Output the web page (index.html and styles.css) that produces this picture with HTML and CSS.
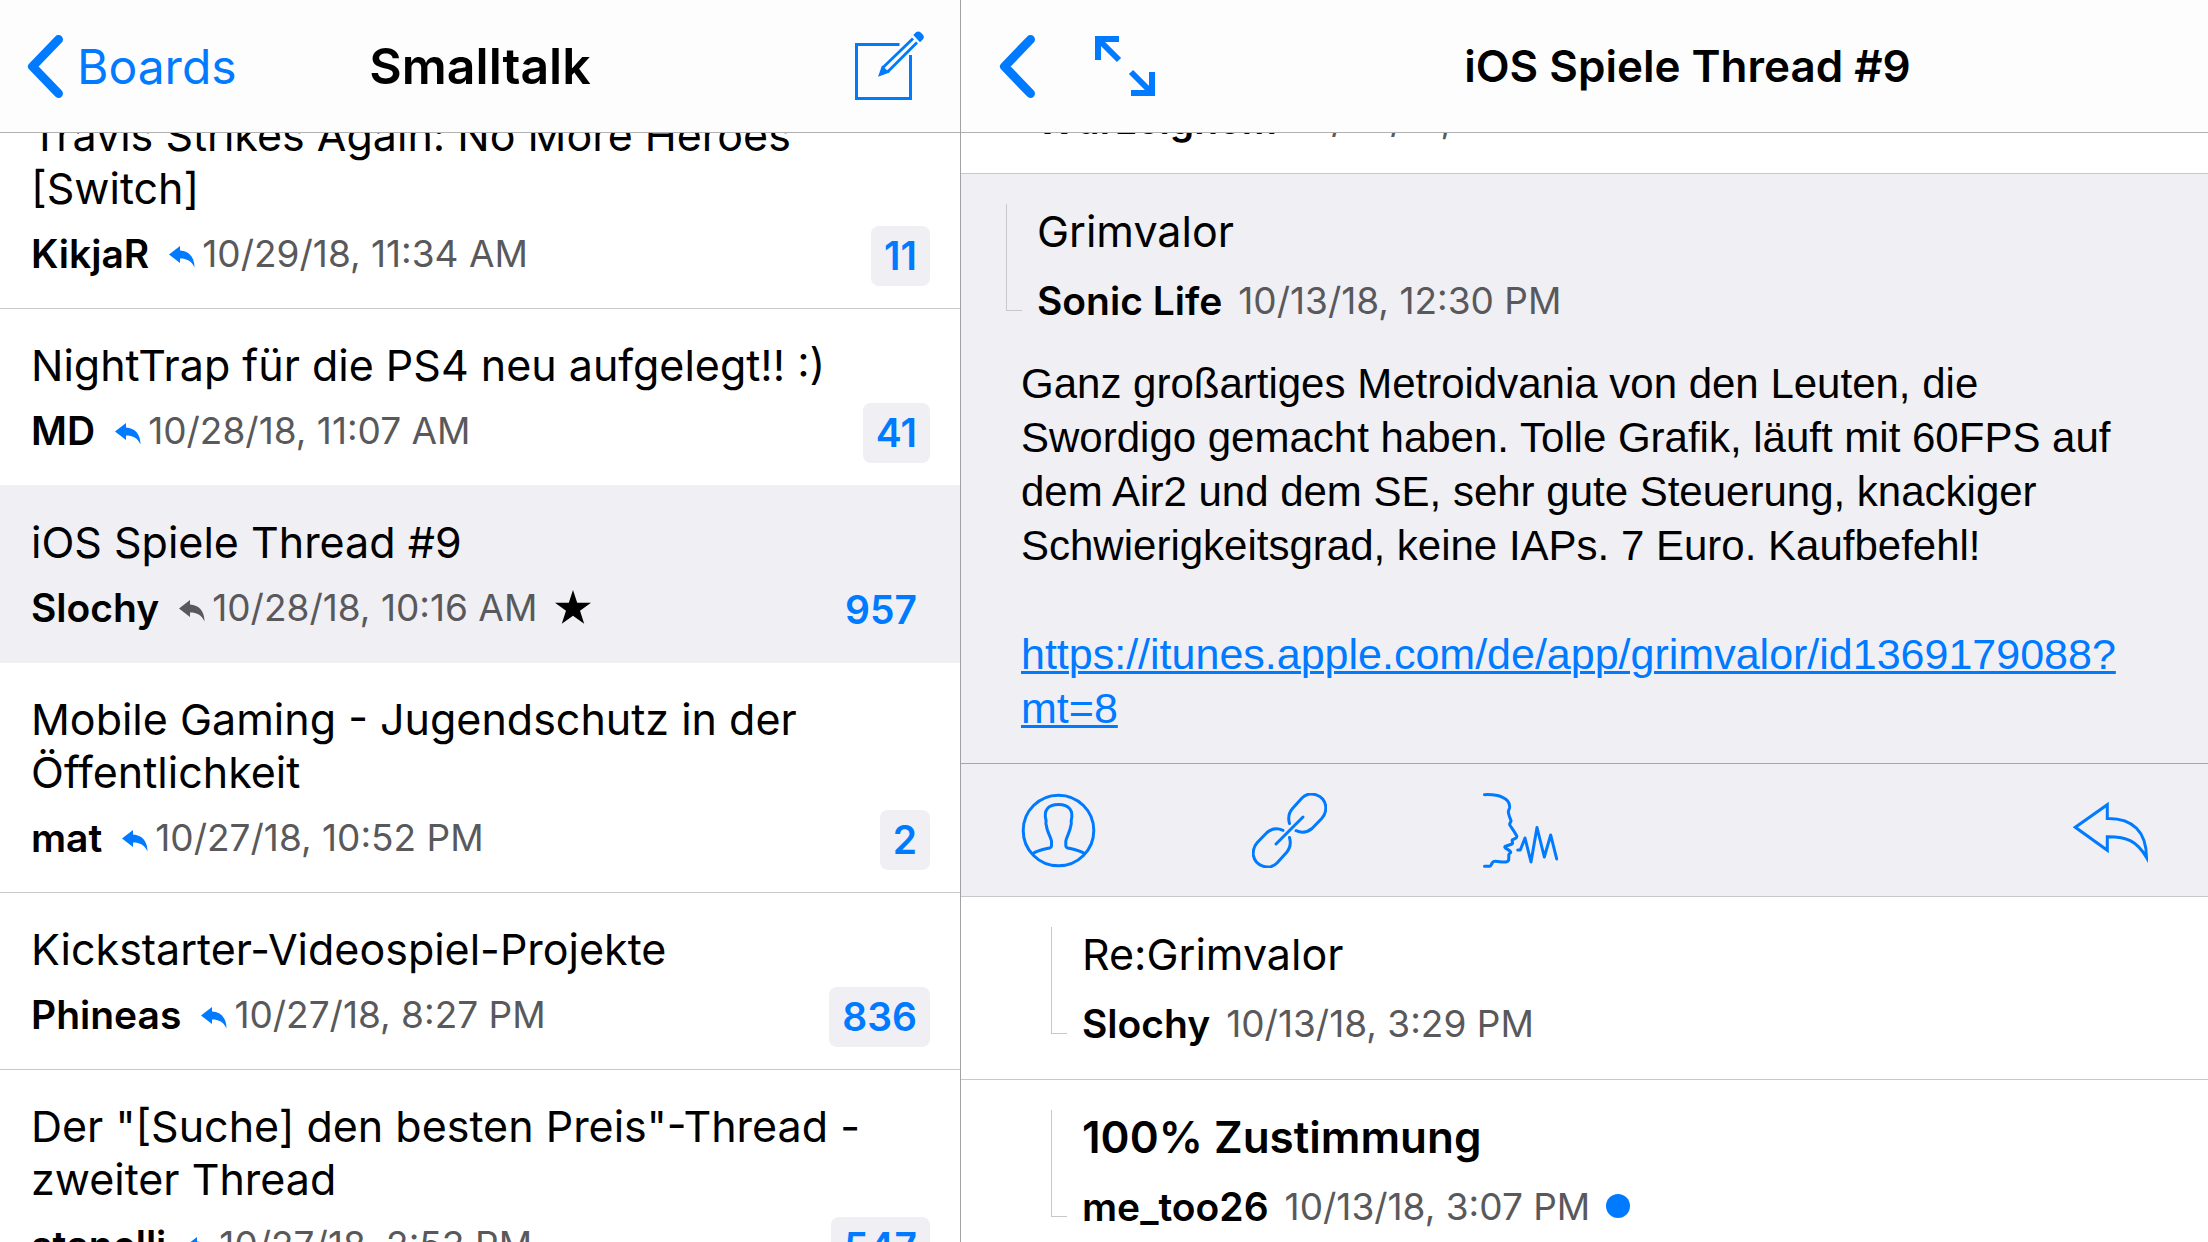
FILE: index.html
```html
<!DOCTYPE html>
<html lang="de">
<head>
<meta charset="utf-8">
<title>Smalltalk</title>
<link rel="stylesheet" href="styles.css">
</head>
<body>
<svg class="defs" aria-hidden="true">
  <symbol id="chevron" viewBox="0 0 36 63"><path d="M31.5 4.5 5.5 31.5l26 27" fill="none" stroke="currentColor" stroke-width="9" stroke-linecap="round" stroke-linejoin="round"/></symbol>
  <symbol id="replied" viewBox="0 0 26 22"><path d="M0 8.500 11 0v4.500C20 5 25.500 11 25.500 21.500 22.500 15 18 12.500 11 12.500V17z" fill="currentColor"/></symbol>
</svg>
<div class="app">
  <section class="pane">
    <header class="bar">
      <button class="back"><svg class="chevron" aria-hidden="true"><use href="#chevron"/></svg>Boards</button>
      <h1 class="bar-title">Smalltalk</h1>
      <button class="compose" aria-label="Neuer Thread">
        <svg width="69" height="72" viewBox="0 0 69 72" fill="none" stroke="currentColor" stroke-width="3">
          <path d="M44.500 14.500H1.500v54h54V25"/>
          <path d="M58 8.500 28.500 37l-2 6.500 7-2.500L62 12.500" stroke-width="2.800"/>
          <path d="m23 46.700 4-11.200 7.500 7z" fill="currentColor" stroke="none"/>
          <path d="m58.300 5 2.700-2.700q2.500-2 5 .5l1.500 1.500q2.500 2.500.5 5L65 12.300z" fill="currentColor" stroke="none"/>
        </svg>
      </button>
    </header>
    <nav class="scroll threads">
      <a class="thread" href="#"><span class="title">Travis Strikes Again: No More Heroes [Switch]</span>
        <span class="meta"><b class="author">KikjaR</b><svg class="replied"><use href="#replied"/></svg><span class="date">10/29/18, 11:34 AM</span><span class="count">11</span></span></a>
      <a class="thread before-selected" href="#"><span class="title">NightTrap für die PS4 neu aufgelegt!! :)</span>
        <span class="meta"><b class="author">MD</b><svg class="replied"><use href="#replied"/></svg><span class="date">10/28/18, 11:07 AM</span><span class="count">41</span></span></a>
      <a class="thread selected" href="#"><span class="title">iOS Spiele Thread #9</span>
        <span class="meta"><b class="author">Slochy</b><svg class="replied"><use href="#replied"/></svg><span class="date">10/28/18, 10:16 AM</span><svg class="star" viewBox="0 0 36 34"><path d="M18 0l4.200 12.700H36l-11 8 4.200 13L18 25.800 6.800 33.700l4.200-13-11-8h13.800z"/></svg><span class="count">957</span></span></a>
      <a class="thread" href="#"><span class="title">Mobile Gaming - Jugendschutz in der Öffentlichkeit</span>
        <span class="meta"><b class="author">mat</b><svg class="replied"><use href="#replied"/></svg><span class="date">10/27/18, 10:52 PM</span><span class="count">2</span></span></a>
      <a class="thread" href="#"><span class="title">Kickstarter-Videospiel-Projekte</span>
        <span class="meta"><b class="author">Phineas</b><svg class="replied"><use href="#replied"/></svg><span class="date">10/27/18, 8:27 PM</span><span class="count">836</span></span></a>
      <a class="thread" href="#"><span class="title">Der "[Suche] den besten Preis"-Thread - zweiter Thread</span>
        <span class="meta"><b class="author">stanelli</b><svg class="replied"><use href="#replied"/></svg><span class="date">10/27/18, 2:53 PM</span><span class="count">547</span></span></a>
    </nav>
  </section>

  <section class="pane detail">
    <header class="bar">
      <button class="back" aria-label="Zurück"><svg class="chevron"><use href="#chevron"/></svg></button>
      <button aria-label="Vollbild">
        <svg width="60" height="60" viewBox="0 0 60 60" fill="none" stroke="currentColor" stroke-width="6"><path d="M3 24V3h21M3 3l21 21M57 36v21H36M57 57 36 36"/></svg>
      </button>
      <h2 class="bar-title">iOS Spiele Thread #9</h2>
    </header>
    <div class="scroll messages">
      <article class="message">
        <div class="content">
          <div class="meta"><b class="author">Wurzelgnom</b><span class="date">10/26/18, 9:14 AM</span></div></div>
      </article>
      <article class="message open">
        <span class="branch"></span>
        <div class="content"><h3 class="title">Grimvalor</h3>
          <div class="meta"><b class="author">Sonic Life</b><span class="date">10/13/18, 12:30 PM</span></div></div>
        <div class="body">
          <p>Ganz großartiges Metroidvania von den Leuten, die Swordigo gemacht haben. Tolle Grafik, läuft mit 60FPS auf dem Air2 und dem SE, sehr gute Steuerung, knackiger Schwierigkeitsgrad, keine IAPs. 7 Euro. Kaufbefehl!</p>
          <p class="link"><a href="https://itunes.apple.com/de/app/grimvalor/id1369179088?mt=8">https://itunes.apple.com/de/app/grimvalor/id1369179088?<wbr>mt=8</a></p>
        </div>
      </article>
      <div class="tools">
        <button aria-label="Profil"><svg width="75" height="75" viewBox="0 0 75 75"><circle cx="37.500" cy="37.500" r="35.300"/><path d="M12 60.500c4-3 12-4.500 16.500-5.500 1.500-.5 2-1 2-2.500V48c-1-4.500-4.500-9.500-5-15-1.500-3 0-4-.5-6-2.500-9 1.500-15.500 12.500-15.500S52.500 18 50.300 27c-.5 2 .7 3-.5 6-.8 5.500-4 10.500-5 15v4.500c0 1.500.5 2 2 2.500 4.500 1 12.500 2.500 16.500 5.500"/></svg></button>
        <button aria-label="Link kopieren"><svg width="75" height="75" viewBox="0 0 75 75"><path id="ring" d="M37.500 30.500Q35 22 40.500 15.500L50 5C58-3 72 2 73.700 13q.8 7-4 12.500L60 35.500q-7 6-16 2.200"/><use href="#ring" transform="rotate(180 37.500 37.500)"/><path d="M51 24 24 51"/></svg></button>
        <button aria-label="Vorlesen"><svg width="75" height="75" viewBox="0 0 75 75"><path d="M1.500 1.700C15 1 28 5 26.500 15c-.4 2-1.700 3-1 5 .5 3 1 4 2.500 7.500.3 1.500-2 2.500-1.200 4.500 2 3 5 7 7 11 .3 1.300 0 1.700-1.300 2.300l-3.200 1.500c-.8 1 1.300 3.700-.3 4.200L22 53.500c-1.500 1.500 5 3.500 5.700 5.500.3 1.200-2 1.500-1.900 2.700v4.100c0 2.200-1 3-3 3.200-4 .5-7-.8-11-.7-2.500 0-3 2.700-4 4.200-.4.700-.8.800-1.500.8H1.500M34.700 57h2.600L42 45l6 24 6-34.500L61.300 64l6.400-22 6 24"/></svg></button>
        <button class="answer" aria-label="Antworten"><svg width="75" height="75" viewBox="0 0 75 75"><path stroke-linejoin="miter" d="m2.300 34.300 32-22.600v13.700C60 25 73.500 39 73.500 64.500 64 48 54 43.500 34.300 43.700v13.600z"/></svg></button>
      </div>
      <article class="message reply">
        <span class="branch"></span>
        <div class="content"><h3 class="title">Re:Grimvalor</h3>
          <div class="meta"><b class="author">Slochy</b><span class="date">10/13/18, 3:29 PM</span></div></div>
      </article>
      <article class="message reply unread">
        <span class="branch"></span>
        <div class="content"><h3 class="title">100% Zustimmung</h3>
          <div class="meta"><b class="author">me_too26</b><span class="date">10/13/18, 3:07 PM</span><i class="dot"></i></div></div>
      </article>
    </div>
  </section>
</div>
</body>
</html>
```
FILE: styles.css
```css
* { box-sizing: border-box; }

body {
  margin: 0;
  background: #fff;
  color: #000;
  font-family: Inter, "Liberation Sans", sans-serif;
}

h1, h2, h3, p { margin: 0; }

a { color: inherit; text-decoration: none; }

button {
  display: flex;
  align-items: center;
  padding: 0;
  border: 0;
  background: none;
  color: #007aff;
  font: inherit;
}

.defs { position: absolute; width: 0; height: 0; }

.app {
  display: grid;
  grid-template-columns: 10fr 13fr;
  height: 100vh;
  overflow: hidden;
}

.pane {
  display: flex;
  flex-direction: column;
  min-width: 0;
  min-height: 0;
}

.detail { border-left: 1px solid #a2a2a6; }

/* Navigation bars */
.bar {
  display: grid;
  grid-template-columns: 1fr auto 1fr;
  align-items: center;
  flex: none;
  height: 133px;
  padding: 0 27px;
  border-bottom: 1px solid #b2b2b2;
  background: #fdfdfd;
}

.back { gap: 14px; font-size: 48px; }
.chevron { width: 36px; height: 63px; }
.bar-title { font-size: 50px; font-weight: 600; }
.compose { justify-self: end; margin-right: 9px; }

.detail .bar {
  display: flex;
  gap: 60px;
  padding: 0 0 0 38px;
}

.detail .bar-title {
  flex: 1;
  margin-left: -48px;
  font-size: 44px;
  text-align: center;
}

.scroll { flex: 1; min-height: 0; overflow: hidden; }

/* Shared row text */
.title {
  display: block;
  font-size: 43px;
  font-weight: 400;
  line-height: 53px;
}

.meta { display: flex; line-height: 54px; }
.author { font-size: 39px; font-weight: 600; }
.date { color: #59595c; font-size: 37px; }

/* Thread list */
.thread:first-child { margin-top: -54px; }

.thread {
  display: block;
  padding: 30px 30px 22px 31px;
  border-bottom: 1px solid #c8c7cc;
}

.thread .meta { height: 60px; margin-top: 11px; line-height: 56px; }
.thread.before-selected,
.thread.selected { border-color: #efeff4; }
.thread.selected { background: #efeff4; }

.replied {
  width: 26px;
  height: 22px;
  margin: 20px 7px 0 20px;
  color: #007aff;
}

.selected .replied { color: #59595c; }
.star { width: 36px; height: 34px; margin: 10px 0 0 18px; }

.thread .count {
  margin-left: auto;
  padding: 0 13px;
  border-radius: 8px;
  background: #efeff4;
  color: #007aff;
  font-size: 39px;
  font-weight: 600;
  line-height: 60px;
}

/* Messages */
.message {
  display: grid;
  grid-template-columns: 16px 1fr;
  column-gap: 15px;
  padding: 30px 45px 28px;
  border-bottom: 1px solid #c8c7cc;
}

.message:first-child {
  grid-template-columns: 1fr;
  margin-top: -56px;
  padding: 0 75px 26px;
}

.message.reply { padding-left: 90px; }
.message.open { background: #efeff4; border-color: #a7a7ab; }
.message .title { padding-top: 1px; }
.message .meta { gap: 16px; margin-top: 16px; }
.unread .title { font-size: 44px; font-weight: 600; }

.branch {
  height: 107px;
  border: solid #c8c7cc;
  border-width: 0 0 1px 1px;
}

.dot {
  width: 24px;
  height: 24px;
  margin-top: 14px;
  border-radius: 50%;
  background: #007aff;
}

.body {
  grid-column: 1 / -1;
  margin: 29px 0 0 15px;
  font-family: "Liberation Sans", Arial, sans-serif;
  font-size: 42px;
  line-height: 54px;
}

.body p + p { margin-top: 54px; }
.link { font-size: 43px; }

.body a {
  color: #007aff;
  text-decoration: underline;
  text-decoration-thickness: 3px;
}

.tools {
  display: flex;
  align-items: center;
  gap: 156px;
  height: 133px;
  padding: 0 60px;
  border-bottom: 1px solid #c8c7cc;
  background: #efeff4;
}

.tools svg {
  fill: none;
  stroke: currentColor;
  stroke-width: 3;
  stroke-linecap: round;
  stroke-linejoin: round;
}

.answer { margin-left: auto; }
```
